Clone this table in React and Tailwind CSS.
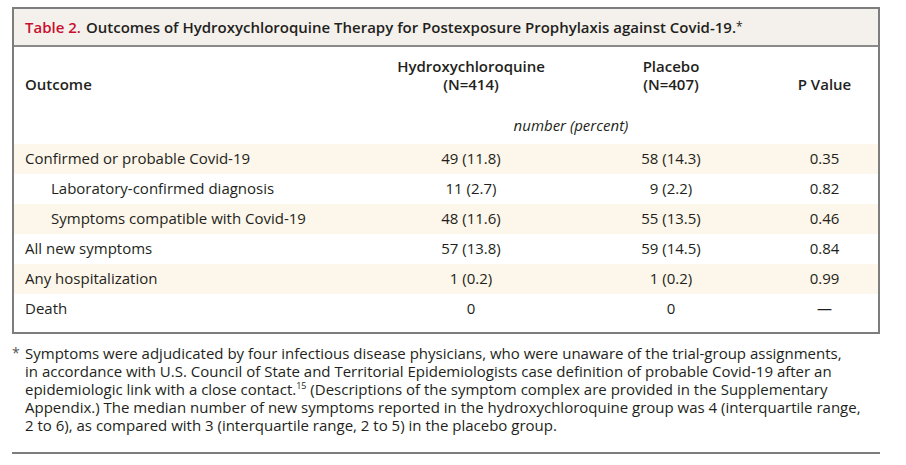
import React from "react";

const rows = [
  { label: "Confirmed or probable Covid-19", a: "49 (11.8)", b: "58 (14.3)", p: "0.35", indent: false, shade: true },
  { label: "Laboratory-confirmed diagnosis", a: "11 (2.7)", b: "9 (2.2)", p: "0.82", indent: true, shade: false },
  { label: "Symptoms compatible with Covid-19", a: "48 (11.6)", b: "55 (13.5)", p: "0.46", indent: true, shade: true },
  { label: "All new symptoms", a: "57 (13.8)", b: "59 (14.5)", p: "0.84", indent: false, shade: false },
  { label: "Any hospitalization", a: "1 (0.2)", b: "1 (0.2)", p: "0.99", indent: false, shade: true },
  { label: "Death", a: "0", b: "0", p: "—", indent: false, shade: false },
];

export default function App() {
  return (
    <div
      className="w-[906px] h-[465px] bg-white text-[#231f20] pt-[7px] pl-[12px]"
      style={{ fontFamily: '"Open Sans", "DejaVu Sans", sans-serif' }}
    >
      <div className="w-[868px] border-2 border-[#7d7d7d]">
        <div className="h-[38px] bg-[#f4f1ec] border-b-2 border-[#8a8a8a] flex items-center pl-[11px] text-[15px] font-semibold">
          <span className="text-[#c8102e]">Table 2.</span>
          <span className="ml-[5px]">Outcomes of Hydroxychloroquine Therapy for Postexposure Prophylaxis against Covid-19.</span>
          <span className="text-[12px] self-start mt-[9px] font-normal">*</span>
        </div>
        <div className="grid grid-cols-[357px_200px_200px_107px] text-[15px] pt-[10px]">
          <div className="pl-[11px] font-semibold flex items-end leading-[18px]">Outcome</div>
          <div className="font-semibold text-center leading-[18px]">
            Hydroxychloroquine
            <br />
            (N=414)
          </div>
          <div className="font-semibold text-center leading-[18px]">
            Placebo
            <br />
            (N=407)
          </div>
          <div className="font-semibold text-center flex items-end justify-center leading-[18px]">P Value</div>
        </div>
        <div className="grid grid-cols-[357px_400px_107px] text-[15px] pt-[21px] pb-[7px]">
          <div />
          <div className="italic text-center">number (percent)</div>
          <div />
        </div>
        <div className="pb-[8px]">
          {rows.map((r) => (
            <div
              key={r.label}
              className={`grid grid-cols-[357px_200px_200px_107px] h-[30px] items-center text-[15px] ${r.shade ? "bg-[#fdf6ea]" : "bg-white"}`}
            >
              <div className={r.indent ? "pl-[37px]" : "pl-[11px]"}>{r.label}</div>
              <div className="text-center">{r.a}</div>
              <div className="text-center">{r.b}</div>
              <div className="text-center">{r.p}</div>
            </div>
          ))}
        </div>
      </div>
      <div className="w-[868px] pt-[10px] pb-[18px] border-b-2 border-[#7d7d7d] flex text-[15px] leading-[18px]">
        <span className="w-[13px] shrink-0 text-[14px] text-[#555]">*</span>
        <div className="flex flex-col whitespace-nowrap">
          <span>Symptoms were adjudicated by four infectious disease physicians, who were unaware of the trial-group assignments,</span>
          <span>in accordance with U.S. Council of State and Territorial Epidemiologists case definition of probable Covid-19 after an</span>
          <span>
            epidemiologic link with a close contact.
            <span className="relative -top-[6px] text-[9px] leading-none">15</span> (Descriptions of the symptom complex are provided in the Supplementary
          </span>
          <span>Appendix.) The median number of new symptoms reported in the hydroxychloroquine group was 4 (interquartile range,</span>
          <span>2 to 6), as compared with 3 (interquartile range, 2 to 5) in the placebo group.</span>
        </div>
      </div>
    </div>
  );
}
